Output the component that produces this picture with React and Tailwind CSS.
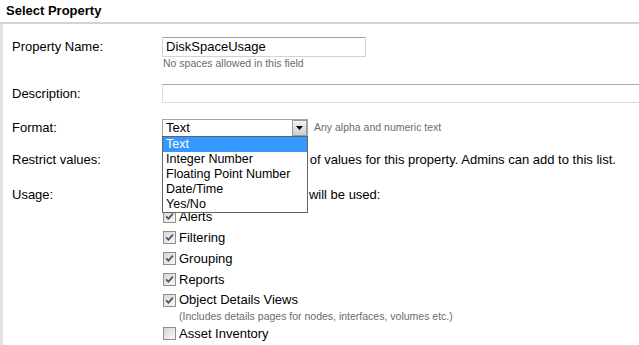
import React from 'react';

const usages = [
    { label: 'Alerts', checked: true },
    { label: 'Filtering', checked: true },
    { label: 'Grouping', checked: true },
    { label: 'Reports', checked: true },
];

const formats = ['Text', 'Integer Number', 'Floating Point Number', 'Date/Time', 'Yes/No'];

const CheckBox = ({ checked }) => (
    <span className="w-[13px] h-[13px] shrink-0 border border-[#8e8e8e] bg-linear-to-br from-[#d6d6d6] to-[#f8f8f8] flex items-center justify-center">
        {checked && (
            <svg width="9" height="9" viewBox="0 0 9 9">
                <path d="M1.2 4.4 L3.4 6.8 L7.9 1.6" fill="none" stroke="#44526f" strokeWidth="1.7" />
            </svg>
        )}
    </span>
);

const App = () => {
    return (
        <div className="w-[639px] h-[345px] overflow-hidden bg-white text-black text-[13px] font-['Liberation_Sans',Arial,sans-serif]">
            <div className="h-[24px] pl-[6px] border-b-2 border-[#d3d3d3] font-bold leading-[22px]">
                Select Property
            </div>

            <div className="h-[321px] border-l-[3px] border-[#e1e1e1] pl-[9px]">
                {/* Property name */}
                <div className="flex pt-[13px]">
                    <div className="w-[150px] shrink-0 leading-[20px]">Property Name:</div>
                    <div>
                        <div className="w-[204px] h-[20px] border border-[#d2d2d2] border-t-[#a3a3a3] px-[3px] leading-[18px]">
                            DiskSpaceUsage
                        </div>
                        <div className="pl-[1px] text-[10.5px] leading-[12px] text-[#6b6b6b]">
                            No spaces allowed in this field
                        </div>
                    </div>
                </div>

                {/* Description */}
                <div className="flex mt-[15px]">
                    <div className="w-[150px] shrink-0 leading-[19px]">Description:</div>
                    <div className="w-[480px] h-[19px] shrink-0 border border-[#dcdcdc] border-t-[#a9a9a9]" />
                </div>

                {/* Format */}
                <div className="flex items-center mt-[16px]">
                    <div className="w-[150px] shrink-0 leading-[18px]">Format:</div>
                    <div className="relative w-[146px] h-[18px] shrink-0 border border-[#a5a5a5] z-10">
                        <div className="pl-[3px] leading-[16px]">Text</div>
                        <div className="absolute right-0 top-0 w-[15px] h-[16px] border border-[#9c9c9c] bg-linear-to-b from-[#f4f4f4] to-[#cdcdcd] flex items-center justify-center">
                            <svg width="7" height="4" viewBox="0 0 7 4">
                                <path d="M0 0 H7 L3.5 4 Z" fill="#000" />
                            </svg>
                        </div>
                        <div className="absolute left-[-1px] top-[16px] w-[146px] border border-[#646464] bg-white">
                            {formats.map((f, i) => (
                                <div
                                    key={f}
                                    className={
                                        i === 0
                                            ? 'h-[15px] leading-[15px] pl-[3px] text-[12.5px] bg-[#3399ff] text-white'
                                            : 'h-[15px] leading-[15px] pl-[3px] text-[12.5px]'
                                    }
                                >
                                    {f}
                                </div>
                            ))}
                        </div>
                    </div>
                    <span className="ml-[6px] text-[10.5px] text-[#6b6b6b] whitespace-nowrap">Any alpha and numeric text</span>
                </div>

                {/* Restrict values */}
                <div className="flex items-center mt-[15px] leading-[16px]">
                    <div className="w-[150px] shrink-0">Restrict values:</div>
                    <div className="flex items-center gap-[3px] pl-[1px]">
                        <CheckBox checked={false} />
                        <span className="whitespace-nowrap">
                            Select from a fixed list of values for this property. Admins can add to this list.
                        </span>
                    </div>
                </div>

                {/* Usage */}
                <div className="flex mt-[19px] leading-[16px]">
                    <div className="w-[150px] shrink-0">Usage:</div>
                    <div className="whitespace-nowrap pl-[6px]">Select where a property will be used:</div>
                </div>

                <div className="ml-[150px] pl-[1px] mt-[3px]">
                    {usages.map((u) => (
                        <div key={u.label} className="flex items-center gap-[3px] h-[21px]">
                            <CheckBox checked={u.checked} />
                            <span>{u.label}</span>
                        </div>
                    ))}
                    <div className="flex items-center gap-[3px] h-[20px]">
                        <CheckBox checked />
                        <span>Object Details Views</span>
                    </div>
                    <div className="pl-[16px] text-[10.5px] leading-[12px] text-[#6b6b6b] whitespace-nowrap">
                        (Includes details pages for nodes, interfaces, volumes etc.)
                    </div>
                    <div className="flex items-center gap-[3px] h-[21px] mt-[1px]">
                        <CheckBox checked={false} />
                        <span>Asset Inventory</span>
                    </div>
                </div>
            </div>
        </div>
    );
};

export default App;
